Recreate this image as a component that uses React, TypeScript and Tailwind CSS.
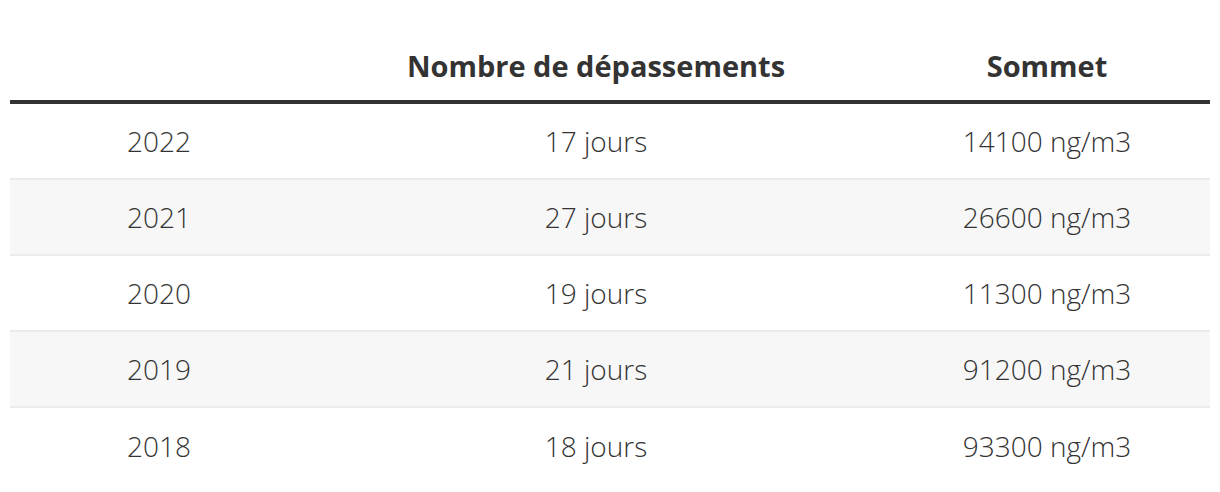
import React from "react";

const rows = [
  ["2022", "17 jours", "14100 ng/m3"],
  ["2021", "27 jours", "26600 ng/m3"],
  ["2020", "19 jours", "11300 ng/m3"],
  ["2019", "21 jours", "91200 ng/m3"],
  ["2018", "18 jours", "93300 ng/m3"],
];

export default function App() {
  return (
    <div className="w-[1220px] h-[492px] bg-white px-[10px] pt-[34px] text-[#333]" style={{ fontFamily: '"Open Sans", sans-serif' }}>
      <div className="grid grid-cols-[298px_576px_326px] h-[70px] border-b-4 border-[#333] font-bold text-[29px] leading-[64px] text-center">
        <div></div>
        <div>Nombre de dépassements</div>
        <div>Sommet</div>
      </div>
      {rows.map((r, i) => (
        <div
          key={r[0]}
          className={`grid grid-cols-[298px_576px_326px] items-center text-center font-light text-[28px] ${i < rows.length - 1 ? "h-[76px] border-b-2 border-[#ebebeb]" : "h-[76px]"} ${i % 2 === 1 ? "bg-[#f7f7f7]" : "bg-white"}`}
        >
          {r.map((c, j) => (
            <div key={j}>{c}</div>
          ))}
        </div>
      ))}
    </div>
  );
}
